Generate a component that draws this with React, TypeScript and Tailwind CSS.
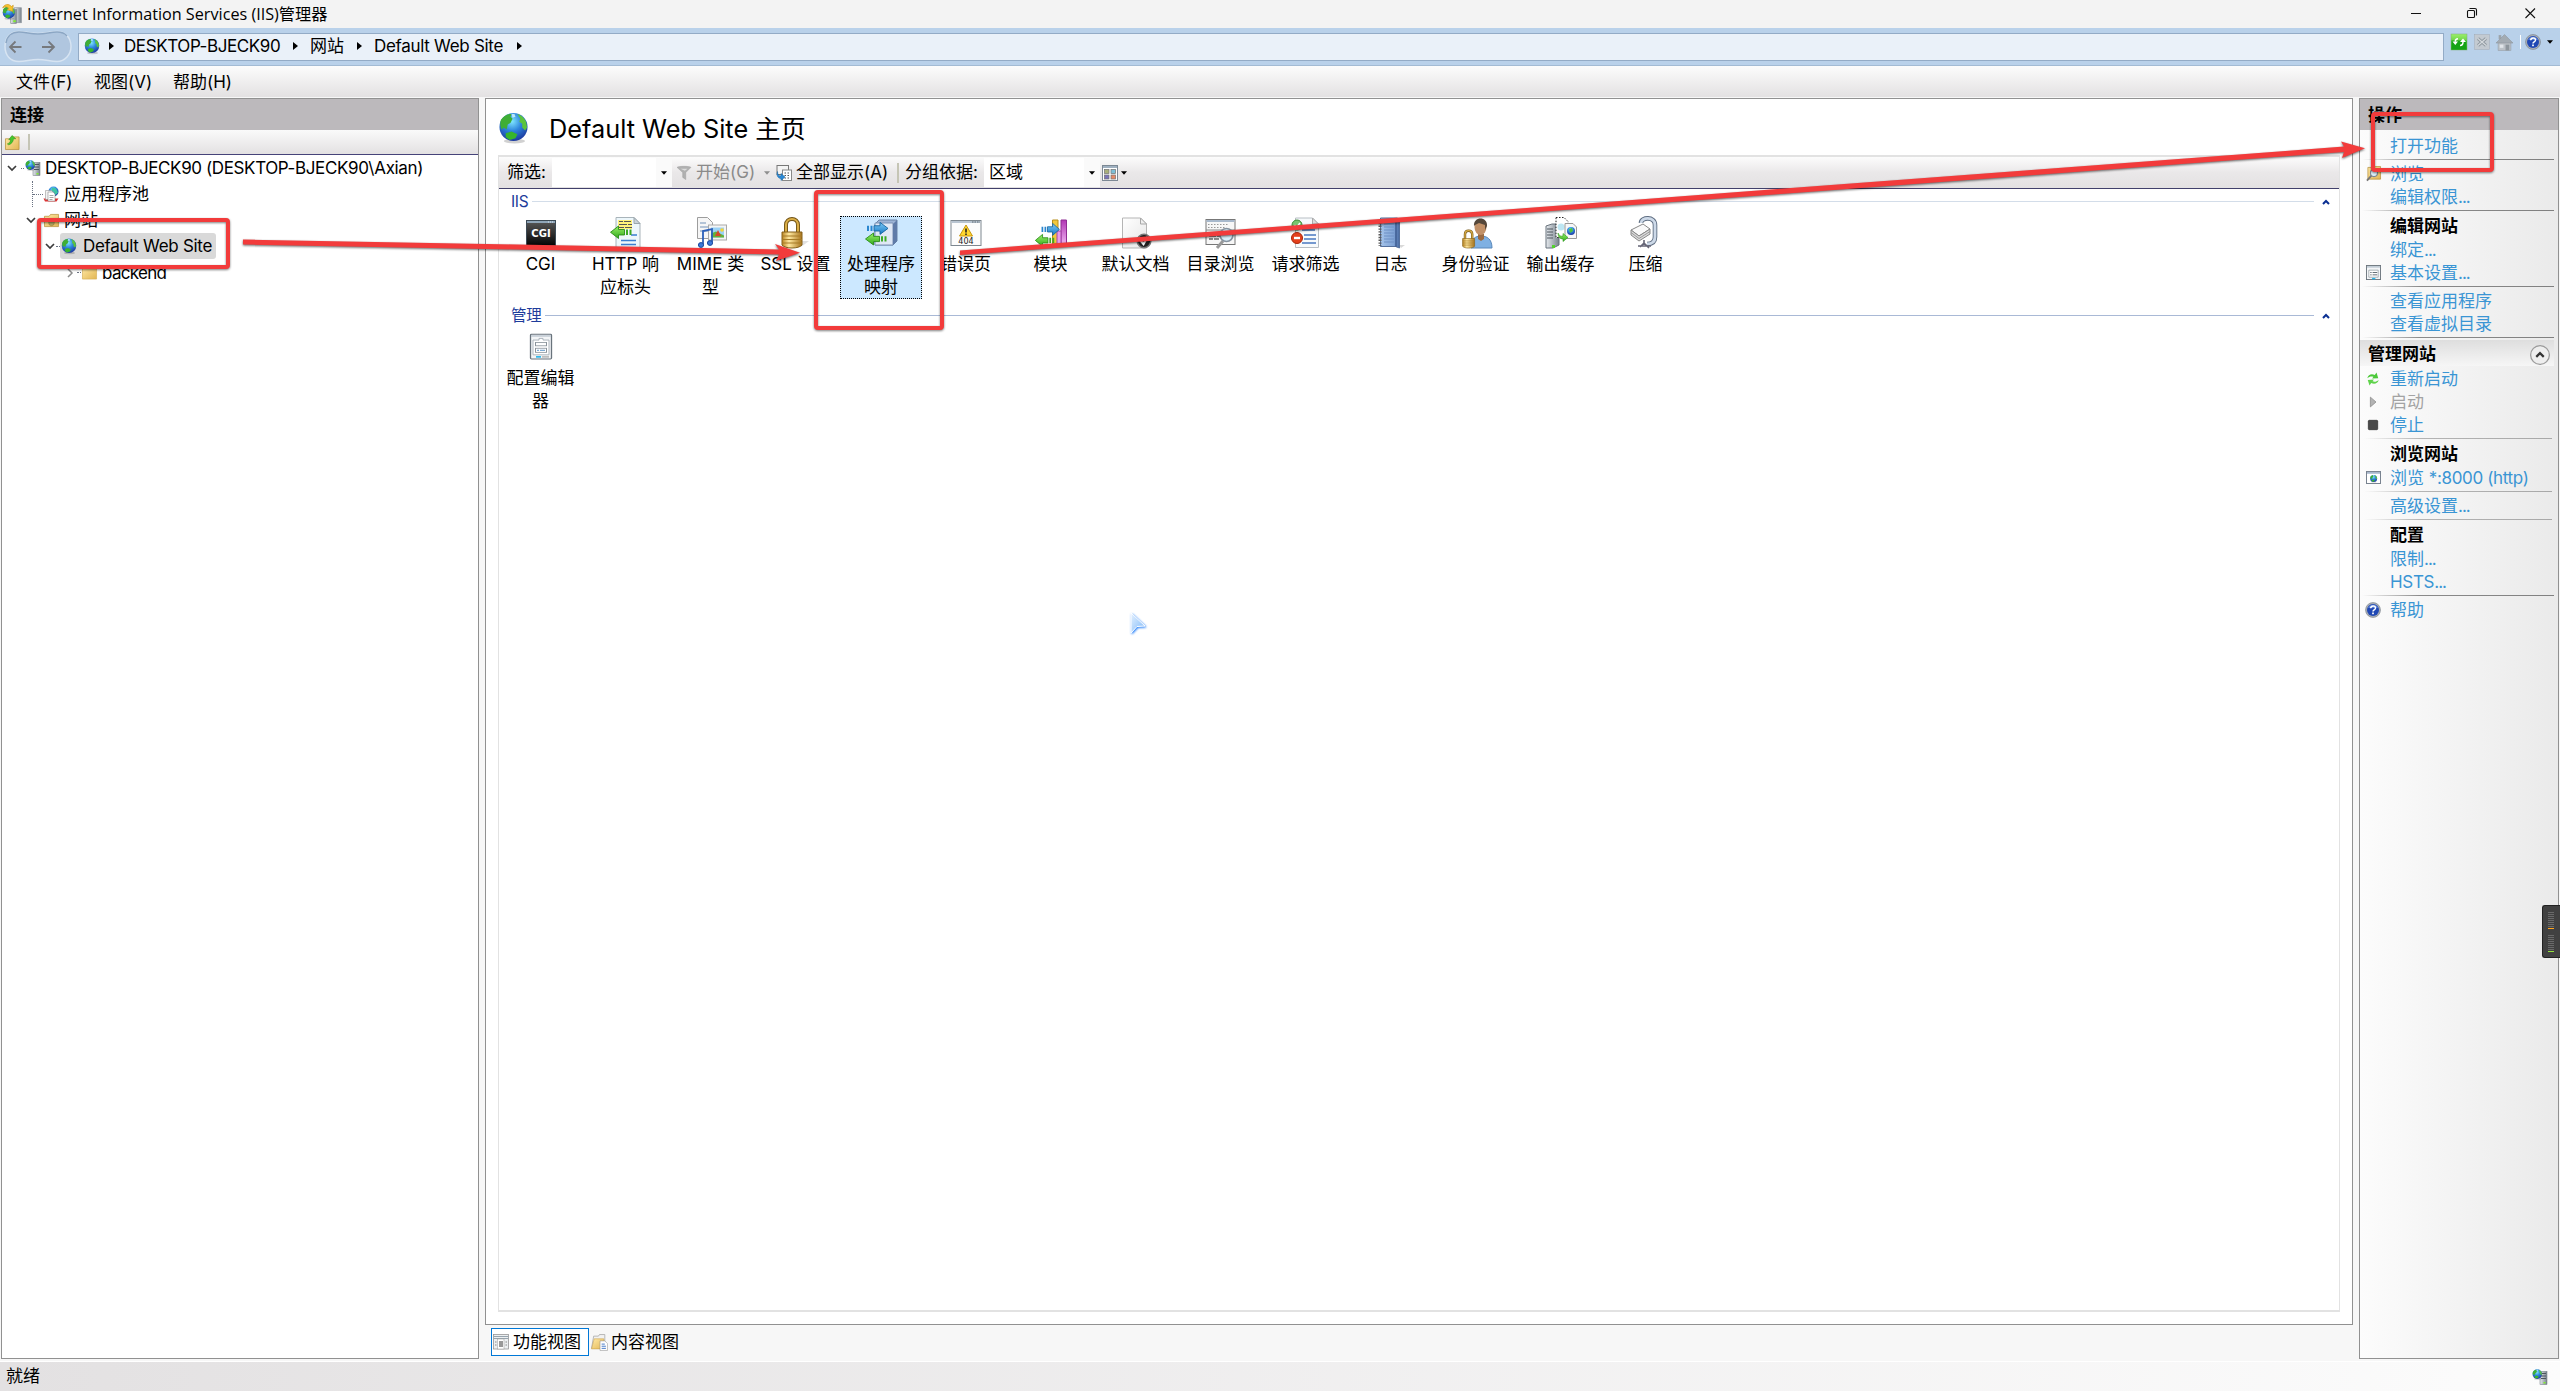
import React from 'react';

type Kids = { children?: React.ReactNode };

/* ---------- icons ---------- */

const Svg = ({ s, vb = 32, children }: { s: number; vb?: number } & Kids) => (
  <svg width={s} height={s} viewBox={`0 0 ${vb} ${vb}`} className="shrink-0 overflow-visible">
    {children}
  </svg>
);

const Defs = () => (
  <svg width="0" height="0" className="absolute">
    <defs>
      <radialGradient id="sea" cx="45%" cy="30%" r="75%">
        <stop offset="0" stopColor="#7fe6ff" />
        <stop offset=".45" stopColor="#2e86dd" />
        <stop offset="1" stopColor="#1a2f96" />
      </radialGradient>
      <linearGradient id="gold" x1="0" x2="1" y1="0" y2="0">
        <stop offset="0" stopColor="#b98420" />
        <stop offset=".35" stopColor="#ffe9a0" />
        <stop offset="1" stopColor="#a8741c" />
      </linearGradient>
      <linearGradient id="folder" x1="0" x2="1" y1="0" y2="1">
        <stop offset="0" stopColor="#ffe9a6" />
        <stop offset="1" stopColor="#e2b653" />
      </linearGradient>
      <linearGradient id="steel" x1="0" x2="1" y1="0" y2="0">
        <stop offset="0" stopColor="#e6eaee" />
        <stop offset="1" stopColor="#78828c" />
      </linearGradient>
      <linearGradient id="green" x1="0" x2="0" y1="0" y2="1">
        <stop offset="0" stopColor="#9bf06a" />
        <stop offset="1" stopColor="#2faa1a" />
      </linearGradient>
      <linearGradient id="blue" x1="0" x2="0" y1="0" y2="1">
        <stop offset="0" stopColor="#7ccbf7" />
        <stop offset="1" stopColor="#1778c4" />
      </linearGradient>
      <linearGradient id="book" x1="0" x2="1" y1="0" y2="0">
        <stop offset="0" stopColor="#a5c4ea" />
        <stop offset=".7" stopColor="#7fa3d6" />
        <stop offset="1" stopColor="#46679f" />
      </linearGradient>
      <linearGradient id="page" x1="0" x2="1" y1="0" y2="1">
        <stop offset="0" stopColor="#ffffff" />
        <stop offset="1" stopColor="#e6e6e6" />
      </linearGradient>
      <linearGradient id="dark" x1="0" x2="0" y1="0" y2="1">
        <stop offset="0" stopColor="#5a5a5a" />
        <stop offset="1" stopColor="#050505" />
      </linearGradient>
      <linearGradient id="purple" x1="0" x2="0" y1="0" y2="1">
        <stop offset="0" stopColor="#b136b4" />
        <stop offset="1" stopColor="#f0b6f2" />
      </linearGradient>
      <linearGradient id="cursor" x1="0" x2="1" y1="0" y2="1">
        <stop offset="0" stopColor="#e4f1ff" />
        <stop offset="1" stopColor="#7db8f8" />
      </linearGradient>
    </defs>
  </svg>
);

const GlobeArt = () => (
  <>
    <ellipse cx="17" cy="30" rx="11" ry="2.4" fill="#000" opacity=".18" />
    <circle cx="16" cy="15.5" r="14.5" fill="url(#sea)" />
    <path d="M3 8C6 4 10 1.500 14 2l-1 3 2 2-2 4-3 2-1 5-3-2-2 2c-2-3-2-7-1-10z" fill="#3fae35" />
    <path d="M20 2c4 1 7 4 9 8l1 6-2 3-3-3v-4l-3-2 1-3z" fill="#5cc43c" />
    <path d="M8 22l6-2 6 3-2 4-6 2-4-3z" fill="#37b52c" />
    <path d="M14 2h3l1 3-3 1z" fill="#d8f5ff" opacity=".8" />
  </>
);
const Globe = ({ s = 16 }: { s?: number }) => (
  <Svg s={s}>
    <GlobeArt />
  </Svg>
);

const ServerGlobe = ({ s = 16 }: { s?: number }) => (
  <Svg s={s}>
    <rect x="16" y="5" width="14" height="26" fill="url(#steel)" stroke="#66707a" />
    <path d="M18 9h10M18 14h10M18 19h10" stroke="#4d555e" strokeWidth="2" />
    <rect x="23" y="26" width="4" height="3" fill="#7ef02a" />
    <g transform="scale(.66)">
      <GlobeArt />
    </g>
  </Svg>
);

const AppIcon = () => (
  <Svg s={20}>
    <rect x="20" y="6" width="11" height="24" fill="url(#steel)" stroke="#8c949c" />
    <rect x="14" y="9" width="9" height="22" fill="url(#steel)" stroke="#7a828a" />
    <rect x="18" y="26" width="4" height="3" fill="#7ef02a" />
    <g transform="translate(0 3) scale(.68)">
      <GlobeArt />
    </g>
    <path d="M1 6C4 0 11-1 15 4l3-2-1 10-9-3 3-2C8 4 5 4 1 6z" fill="#f7c331" stroke="#c8921a" />
  </Svg>
);

const UpFolder = () => (
  <Svg s={15}>
    <path d="M1 8h10l3-4h16v27H1z" fill="url(#folder)" stroke="#b58d35" strokeWidth="1.500" />
    <path d="M5 19c5-2 7-5 7-9H8l7-9 8 7h-5c0 6-4 11-10 13z" fill="#46c72d" stroke="#1e8a14" />
  </Svg>
);

const AppPool = () => (
  <Svg s={16}>
    <circle cx="21" cy="11" r="10" fill="url(#sea)" />
    <path d="M18 3l8 2 4 8-5 5-3-6-5-3z" fill="#3fc5a0" />
    <path d="M1 25l3 6h23l4-6z" fill="#d33" />
    <path d="M5 9h12l4 4v14H5z" fill="#f2f2f2" stroke="#888" />
    <path d="M10 12h10l4 4v14H10z" fill="#fff" stroke="#777" />
    <path d="M13 19h8M13 23h8M13 27h6" stroke="#888" strokeWidth="1.500" />
  </Svg>
);

const Sites = () => (
  <Svg s={15}>
    <path d="M1 7h10l3-4h17v26H1z" fill="url(#folder)" stroke="#b58d35" strokeWidth="1.500" />
    <path d="M1 12h30" stroke="#c59c42" />
    <circle cx="16" cy="21" r="6" fill="#b3a763" stroke="#8d6f2b" />
  </Svg>
);

const PlainFolder = () => (
  <Svg s={15}>
    <path d="M1 6h11l3-3h16v27H1z" fill="url(#folder)" stroke="#d9b25a" strokeWidth="1.500" />
  </Svg>
);

const RightArrow = () => (
  <>
    <path d="M3 9h2v7H3zM6.500 9h2v7h-2z" fill="#2a86cf" />
    <path d="M10 9h6V4.500l8 8-8 8V16h-6z" fill="url(#blue)" stroke="#12629f" />
  </>
);
const LeftArrow = () => (
  <>
    <path d="M17 9h2v7h-2zM20.500 9h2v7h-2z" fill="#3cab25" />
    <path d="M15.500 9h-6V4.500l-8 8 8 8V16h6z" fill="url(#green)" stroke="#278a15" />
  </>
);

const Cgi = () => (
  <Svg s={32}>
    <rect x="1.500" y="3.500" width="29" height="25" fill="url(#dark)" stroke="#3c4a55" />
    <path d="M2 5h28" stroke="#8fa5b8" strokeWidth="2" />
    <path d="M23 5h6" stroke="#dce8f2" strokeWidth="1.200" strokeDasharray="1 1" />
    <text x="16" y="20" textAnchor="middle" fontSize="10" fontWeight="700" fill="#fff" fontFamily="'DejaVu Sans', sans-serif">
      CGI
    </text>
  </Svg>
);

const HttpHeaders = () => (
  <Svg s={32}>
    <path d="M7 .5h18l6 6v25H7z" fill="#edf7fb" stroke="#a9b4ba" />
    <path d="M25 .5v6h6z" fill="#c9d3d8" stroke="#9aa5ab" />
    <path d="M9 3h14v9H9z" fill="#fff27a" />
    <path d="M10 4.500h4M15 4.500h7M10 7.500h8M19 7.500h4M10 10.500h5M16 10.500h7" stroke="#555" />
    <path d="M22 18h6M12 23.500h15M12 27.500h15" stroke="#3a7fd0" strokeWidth="1.300" />
    <g transform="translate(0 5.500) scale(1 .78)">
      <LeftArrow />
    </g>
  </Svg>
);

const Mime = () => (
  <Svg s={32}>
    <path d="M2.500.5h10l5 5v16h-15z" fill="#f6f6f6" stroke="#9d9d9d" />
    <path d="M5 6h6M5 10h9M5 14h9" stroke="#7392b8" />
    <rect x="13.500" y="8" width="18" height="15" fill="#f4f4f4" stroke="#a9a9a9" />
    <rect x="16" y="10.500" width="13" height="10" fill="#9bd2f5" />
    <path d="M16 20.500v-4l5-2 8 4v2z" fill="#65b13a" />
    <path d="M20 19l3-6 3 6z" fill="#d64728" />
    <circle cx="27" cy="13" r="1.800" fill="#f4d43a" />
    <path d="M8 27V14l9-2v13" fill="none" stroke="#2b5fb8" strokeWidth="1.800" />
    <ellipse cx="6" cy="28" rx="2.600" ry="2.400" fill="#3b78d8" stroke="#1e4a9c" />
    <ellipse cx="15" cy="26" rx="2.600" ry="2.400" fill="#3b78d8" stroke="#1e4a9c" />
  </Svg>
);

const LockArt = () => (
  <>
    <path d="M10 16V8c0-8 12-8 12 0v8" fill="none" stroke="#6f5114" strokeWidth="4" />
    <path d="M10 16V8c0-8 12-8 12 0v8" fill="none" stroke="#d9ad46" strokeWidth="2.200" />
    <path d="M6 15h20v13c-3 4-17 4-20 0z" fill="url(#gold)" stroke="#85611a" />
    <path d="M6 19h20M6 22.500h20M6 26h20" stroke="#a67b26" strokeWidth="1" />
  </>
);
const Lock = () => (
  <Svg s={32}>
    <g transform="translate(-4 0)">
      <path d="M26 24l7 0-8 6z" fill="#000" opacity=".12" />
      <LockArt />
    </g>
  </Svg>
);

const Handlers = () => (
  <Svg s={32}>
    <path d="M10 7l4-4h18v21l-4 4H10z" fill="#9db4d6" stroke="#6b83a6" />
    <path d="M10 6h18v22H10z" fill="#dfe8f5" stroke="#7c93b5" />
    <path d="M28 7l4-4v21l-4 4z" fill="#5f7ba8" />
    <g transform="translate(-1 2) scale(1 .75)">
      <RightArrow />
    </g>
    <g transform="translate(-1 12.600) scale(1 .75)">
      <LeftArrow />
    </g>
  </Svg>
);

const Err404 = () => (
  <Svg s={32}>
    <rect x="1" y="3.500" width="30" height="25" fill="#fcfcfc" stroke="#7e8890" />
    <path d="M1.500 5h29" stroke="#b9c5d1" strokeWidth="2" />
    <path d="M22 5h8" stroke="#5d6871" strokeWidth="1.200" strokeDasharray="1.500 1" />
    <path d="M16 8l6.500 11h-13z" fill="#ffd62e" stroke="#c9970c" strokeLinejoin="round" />
    <path d="M16 11.500v4M16 16.500v1.500" stroke="#222" strokeWidth="1.600" />
    <text x="16" y="27" textAnchor="middle" fontSize="8" fill="#222" fontFamily="'DejaVu Sans', sans-serif">
      404
    </text>
  </Svg>
);

const Modules = () => (
  <Svg s={32}>
    <path d="M17.500 3h5.500v24h-5.500z" fill="#f1c83c" stroke="#b78d18" />
    <path d="M26 3h5.500v25H26z" fill="url(#purple)" stroke="#8f2c92" />
    <path d="M22 14h4v14h-4z" fill="#e79be8" stroke="#a545a8" />
    <g transform="translate(4 3) scale(.85 .75)">
      <RightArrow />
    </g>
    <g transform="translate(-1 14) scale(.9 .75)">
      <LeftArrow />
    </g>
  </Svg>
);

const DefaultDoc = () => (
  <Svg s={32}>
    <path d="M2.500 1h18l6 6v24h-24z" fill="url(#page)" stroke="#b5b5b5" />
    <path d="M20.500 1v6h6z" fill="#eee" stroke="#a8a8a8" />
    <circle cx="24" cy="24" r="6.800" fill="#222" stroke="#777" strokeWidth="1.500" />
    <path d="M20.500 23.500l3 3.500 4-7" fill="none" stroke="#fff" strokeWidth="2.200" />
  </Svg>
);

const DirBrowse = () => (
  <Svg s={32}>
    <rect x="1" y="2.500" width="29" height="25" fill="#f7f7f7" stroke="#777" />
    <path d="M1.500 4h28" stroke="#a8b9cc" strokeWidth="2" />
    <path d="M3 7.500h20M3 10.500h18" stroke="#999" strokeDasharray="1.500 1.500" />
    <path d="M1 13h29" stroke="#888" />
    <path d="M4 16h4M10 16h6M4 19h7M12 19h3M4 22h4M9 22h5" stroke="#222" />
    <path d="M18 24l-6 7" stroke="#999" strokeWidth="3" />
    <circle cx="21.500" cy="18" r="6.500" fill="#d9f0fb" stroke="#8793a0" strokeWidth="1.600" />
  </Svg>
);

const ReqFilter = () => (
  <Svg s={32}>
    <path d="M5.500 1h17l6 6v23.500h-23z" fill="#f7fafc" stroke="#b8bec4" />
    <path d="M22.500 1v6h6z" fill="#ddd" stroke="#aaa" />
    <path d="M12 9h13M12 13h13M14 18h12M14 22h12M12 26h14" stroke="#4a78c0" strokeWidth="1.300" />
    <circle cx="7" cy="8" r="5" fill="#78c46d" stroke="#3c8d35" />
    <path d="M4.500 8l2 2.500L10 6" stroke="#fff" fill="none" strokeWidth="1.500" />
    <circle cx="7" cy="21" r="5.500" fill="#e4401c" stroke="#a82609" />
    <path d="M4 21h6" stroke="#fff" strokeWidth="2.400" />
  </Svg>
);

const Logging = () => (
  <Svg s={32}>
    <path d="M24 28l6 0-4 3z" fill="#000" opacity=".15" />
    <path d="M5.500 1h17l2 2v28l-4-1.500h-15z" fill="url(#book)" stroke="#54709d" />
    <path d="M21 3v27" stroke="#3f5e93" strokeWidth="1.500" />
    <path d="M9 7h10M9 10h10M9 13h10M9 16h10M9 19h10M9 22h10M9 25h10" stroke="#6d8fc4" />
    <path d="M5 3v26" stroke="#5a5a5a" strokeWidth="3" strokeDasharray="1.400 1.400" />
  </Svg>
);

const Auth = () => (
  <Svg s={32}>
    <path d="M11 31c0-9 4-12 10-12s11 3 11 12z" fill="#7fb0e2" stroke="#5a88bb" />
    <path d="M18 17h6v5l-3 2-3-2z" fill="#9a6a42" />
    <ellipse cx="20.500" cy="10" rx="6" ry="8" fill="#c19067" />
    <path d="M14 9c-1-10 14-10 13 0l-2 4V8l-6-2-4 2z" fill="#55473a" />
    <g transform="translate(-1 12.500) scale(.6)">
      <LockArt />
    </g>
  </Svg>
);

const OutCache = () => (
  <Svg s={32}>
    <path d="M1 9l6-2h7v21l-6 3H1z" fill="url(#steel)" stroke="#69737c" />
    <path d="M2 12h6M2 15h6M2 18h6M2 21h6" stroke="#4e575f" />
    <path d="M11 .5h8l4 4v16H11z" fill="#fff" stroke="#222" strokeDasharray="1.500 1.500" />
    <circle cx="16" cy="10" r="3.500" fill="#bde6f2" />
    <path d="M20 6.500h8l3.500 3.500v11.500H20z" fill="#f7f7f7" stroke="#999" />
    <circle cx="26" cy="14" r="4" fill="url(#sea)" />
    <path d="M24 12l3-1 1 3-3 2z" fill="#4fc13a" />
    <path d="M13 16c1 3 3 3.500 5 3v-2.500l5 4-5 4V22c-3 0-5-2-5-6z" fill="url(#green)" stroke="#2f9a1f" strokeWidth=".6" />
    <rect x="7" y="28" width="3" height="3" fill="#52d32c" />
  </Svg>
);

const Compress = () => (
  <Svg s={32}>
    <path d="M11 6c0-6 14-7 14 2v12c0 5-3 7-8 7" fill="none" stroke="#5f6e82" strokeWidth="4.600" />
    <path d="M11 6c0-6 14-7 14 2v12c0 5-3 7-8 7" fill="none" stroke="#cdd9e8" strokeWidth="2.800" />
    <path d="M1 13l12-6 7 5-11 7z" fill="#fafafa" stroke="#888" />
    <path d="M1 13v5l8 6 11-7v-5l-11 7z" fill="#dcdcdc" stroke="#888" />
    <path d="M1 15.500l8 6 11-7" fill="none" stroke="#999" />
    <path d="M14 23v5M8 29h13M14 26l-4 4M14 26l5 5" stroke="#667" strokeWidth="1.600" />
  </Svg>
);

const ConfigEditor = () => (
  <Svg s={32}>
    <g transform="translate(0 2.500) scale(1 .82)">
      <rect x="5.500" y="1" width="21" height="30" rx="1" fill="#f3f5f7" stroke="#69737c" strokeWidth="1.300" />
      <path d="M6 3h20" stroke="#c3ccd5" strokeWidth="2" />
      <path d="M8 8h6v-2h4v2h6v18H8z" fill="#fff" stroke="#a7afb7" />
      <rect x="10.500" y="11" width="11" height="4" fill="#fff" stroke="#8a939b" />
      <rect x="10.500" y="18" width="11" height="5" fill="#fff" stroke="#8a939b" />
      <path d="M12 20.500h2M15 20.500h5" stroke="#4b8ac4" />
      <path d="M11 28.500h5" stroke="#25b5ea" strokeWidth="2" />
      <path d="M17 28.500h7" stroke="#bbb" strokeWidth="2" />
    </g>
  </Svg>
);

const Settings = () => (
  <Svg s={15}>
    <rect x="1" y="1" width="30" height="30" fill="#f4f6f8" stroke="#6c757d" strokeWidth="2" />
    <path d="M2 4h28" stroke="#b8c4cf" strokeWidth="3" />
    <path d="M6 11h20v15H6z" fill="#fff" stroke="#8c959d" strokeWidth="1.500" />
    <path d="M9 16h3M14 16h10M9 21h3M14 21h10" stroke="#5a646d" strokeWidth="2" />
    <path d="M13 29h7" stroke="#25b5ea" strokeWidth="3" />
  </Svg>
);

const BrowseFolder = () => (
  <Svg s={15}>
    <path d="M4 3h14l2-2h11v27H4z" fill="url(#folder)" stroke="#b58d35" strokeWidth="1.500" />
    <path d="M12 20L2 31" stroke="#777" strokeWidth="4" />
    <circle cx="17" cy="15" r="7.500" fill="#dff2fb" stroke="#7d8791" strokeWidth="2.500" />
  </Svg>
);

const Restart = () => (
  <Svg s={14}>
    <path d="M3 14C5 6 13 3 20 7l4-6 4 13-14 1 3-4c-5-2-9-1-14 3z" fill="#4cc93a" />
    <path d="M29 18c-2 8-10 11-17 7l-4 6-4-13 14-1-3 4c5 2 9 1 14-3z" fill="#5fd34b" />
  </Svg>
);

const Play = () => (
  <Svg s={12}>
    <path d="M9 3l15 13L9 29z" fill="#b3b3b3" stroke="#8a8a8a" strokeWidth="2" />
  </Svg>
);

const Stop = () => (
  <Svg s={10}>
    <rect x="1" y="1" width="30" height="30" rx="3" fill="#4a4a4a" stroke="#222" strokeWidth="2" />
  </Svg>
);

const BrowseSite = () => (
  <svg width="15" height="13" viewBox="0 0 32 28" className="shrink-0">
    <rect x="1" y="1" width="30" height="26" fill="#fff" stroke="#6f7a88" strokeWidth="2" />
    <path d="M2 4h28" stroke="#a9b8cc" strokeWidth="4" />
    <g transform="translate(8 8) scale(.52)">
      <GlobeArt />
    </g>
  </svg>
);

const Help = () => (
  <Svg s={16}>
    <circle cx="16" cy="16" r="15" fill="#a8adb5" stroke="#6d747c" />
    <circle cx="16" cy="16" r="12" fill="#2048b4" />
    <path d="M6 12a11 11 0 0 1 20 0z" fill="#6f95e6" opacity=".7" />
    <path d="M11.500 12.500c0-6 9.500-6 9.500-.5 0 4-5 3.500-5 7" fill="none" stroke="#fff" strokeWidth="3" />
    <rect x="14.300" y="21" width="3.400" height="3.400" fill="#fff" />
  </Svg>
);

const FeatureView = () => (
  <Svg s={16}>
    <rect x="1" y="1" width="30" height="29" fill="#eceff1" stroke="#909090" strokeWidth="1.500" />
    <path d="M1 5h30M1 9h30" stroke="#97a4ae" strokeWidth="2" />
    <rect x="9" y="10" width="13" height="20" fill="#fff" stroke="#999" />
    <path d="M12 16h8M12 20h8M12 24h8" stroke="#333" strokeWidth="2" />
    <path d="M4 16h3M4 22h3M25 16h3M25 22h3" stroke="#888" strokeWidth="2" />
  </Svg>
);

const ContentView = () => (
  <Svg s={17}>
    <path d="M1 27L5 4h9l2-3h10v26z" fill="#f1f1f1" stroke="#a8a8a8" strokeWidth="1.500" />
    <path d="M1 28L6 9h18l2 19z" fill="url(#folder)" stroke="#c79d45" />
    <path d="M17 13h9l5 5v13H17z" fill="#fff" stroke="#8f8f8f" />
    <path d="M20 19h6M20 23h8M20 27h8" stroke="#3f75c6" strokeWidth="1.800" />
  </Svg>
);

const Refresh = () => (
  <Svg s={16}>
    <rect x="0" y="0" width="32" height="32" fill="url(#green)" stroke="#7fae7a" />
    <rect x="1" y="13" width="30" height="18" fill="#15a315" />
    <path d="M3 15h11l-5.500 7zM18 16h12l-6-7z" fill="#fff" />
    <path d="M14 9.500c-4 0-5.500 2-5.500 6M18 23c4 0 6-2 6-7" fill="none" stroke="#fff" strokeWidth="3" />
  </Svg>
);

const StopNav = () => (
  <Svg s={16}>
    <rect x="1" y="1" width="30" height="30" fill="#c3cad1" stroke="#a3abb3" />
    <path d="M8 9l16 14M24 9L8 23" stroke="#8e979f" strokeWidth="6" />
    <path d="M8 9l16 14M24 9L8 23" stroke="#d5dade" strokeWidth="2.500" />
  </Svg>
);

const Home = () => (
  <Svg s={17}>
    <path d="M5 2h5v8H5z" fill="#9ca4ab" />
    <path d="M4 15h24v16H4z" fill="#bcc2c8" stroke="#9199a0" />
    <path d="M0 17L16 1l16 16z" fill="#a3abb2" stroke="#8c949b" />
    <path d="M18 20h7v11h-7z" fill="#8e969d" />
    <path d="M7 20h7v6H7z" fill="#e1e5e9" />
  </Svg>
);

const Funnel = () => (
  <Svg s={14}>
    <path d="M0 3c6-3 26-3 32 0L20 15v16l-7-5V15z" fill="#b0b0b0" stroke="#9b9b9b" />
    <path d="M8 6h16l-6 5z" fill="#dcdcdc" />
  </Svg>
);

const ShowAll = () => (
  <Svg s={16}>
    <rect x="2" y="1" width="23" height="18" fill="#f4f4f4" stroke="#777" strokeWidth="2" />
    <rect x="13" y="10" width="18" height="21" fill="#fff" stroke="#888" strokeWidth="2" />
    <path d="M17 16h3M23 16h3M17 21h3M23 21h3M17 26h3M23 26h3" stroke="#555" strokeWidth="2" />
    <path d="M3 13c0 6 3 9 7 9v-5l8 7-8 7v-4C5 27 0 22 3 13z" fill="#2c8ad6" stroke="#17629f" />
  </Svg>
);

const ViewGrid = () => (
  <svg width="16" height="16" viewBox="0 0 32 32" className="shrink-0">
    <rect x="1" y="1" width="30" height="30" fill="#fff" stroke="#7c8894" strokeWidth="2" />
    <path d="M2 4h28" stroke="#9fb0c0" strokeWidth="4" />
    <rect x="5" y="9" width="9" height="8" fill="#a9b07a" stroke="#777" strokeWidth="1.500" />
    <rect x="18" y="9" width="9" height="8" fill="#7cc0d8" stroke="#777" strokeWidth="1.500" />
    <rect x="5" y="20" width="9" height="8" fill="#7a74b8" stroke="#777" strokeWidth="1.500" />
    <rect x="18" y="20" width="9" height="8" fill="#e58a68" stroke="#777" strokeWidth="1.500" />
  </svg>
);

const Down = ({ gray }: { gray?: boolean }) => (
  <svg width="6" height="4" viewBox="0 0 7 4" className="shrink-0">
    <path d="M0 0h7L3.500 4z" fill={gray ? '#8e8e8e' : '#000'} />
  </svg>
);
const Crumb = () => (
  <span className="flex w-[30px] shrink-0 justify-center pb-px">
    <svg width="5" height="8" viewBox="0 0 5 8">
      <path d="M0 0l5 4-5 4z" />
    </svg>
  </span>
);
const Chevron = ({ closed }: { closed?: boolean }) => (
  <svg width="10" height="10" viewBox="0 0 10 10" className="shrink-0" fill="none">
    {closed ? (
      <path d="M3 1l4 4-4 4" stroke="#8c8c8c" strokeWidth="1.500" />
    ) : (
      <path d="M1 3l4 4 4-4" stroke="#3c3c3c" strokeWidth="1.700" />
    )}
  </svg>
);

/* ---------- pieces ---------- */

const GroupTitle = ({ label, line, width }: { label: string; line: string; width: string }) => (
  <div className="flex h-6 items-center pt-px text-[15.5px] text-[#1e3c9b]">
    <span className={`${width} tracking-[-0.3px]`}>{label}</span>
    <span className={`h-px flex-1 ${line}`} />
    <svg width="8" height="6" viewBox="0 0 8 6" className="ml-2 mr-[9px] shrink-0">
      <path d="M1 5l3-3 3 3" fill="none" stroke="#0a2f92" strokeWidth="2" />
    </svg>
  </div>
);

const Tile = ({ icon, lines, selected }: { icon: React.ReactNode; lines: string[]; selected?: boolean }) => (
  <div className="flex w-[85px] shrink-0 justify-center">
    <div
      className={
        selected
          ? 'ml-px flex h-[83px] w-[82px] flex-col items-center bg-[#cce8ff] outline-1 -outline-offset-1 outline-dotted outline-black'
          : 'flex h-[83px] flex-col items-center'
      }
    >
      <div className="mb-[5px] h-8 pt-px">{icon}</div>
      {lines.map((l) => (
        <span key={l} className="h-[23px] whitespace-nowrap leading-[23px]">
          {l}
        </span>
      ))}
    </div>
  </div>
);

const features = [
  { icon: <Cgi />, lines: ['CGI'] },
  { icon: <HttpHeaders />, lines: ['HTTP 响', '应标头'] },
  { icon: <Mime />, lines: ['MIME 类', '型'] },
  { icon: <Lock />, lines: ['SSL 设置'] },
  { icon: <Handlers />, lines: ['处理程序', '映射'], selected: true },
  { icon: <Err404 />, lines: ['错误页'] },
  { icon: <Modules />, lines: ['模块'] },
  { icon: <DefaultDoc />, lines: ['默认文档'] },
  { icon: <DirBrowse />, lines: ['目录浏览'] },
  { icon: <ReqFilter />, lines: ['请求筛选'] },
  { icon: <Logging />, lines: ['日志'] },
  { icon: <Auth />, lines: ['身份验证'] },
  { icon: <OutCache />, lines: ['输出缓存'] },
  { icon: <Compress />, lines: ['压缩'] },
];

const Link = ({ icon, muted, more, children }: { icon?: React.ReactNode; muted?: boolean; more?: boolean } & Kids) => (
  <div className="flex h-[23px] items-center">
    <span className="flex w-[30px] shrink-0 justify-center pr-1">{icon}</span>
    <span
      className={
        muted ? 'whitespace-nowrap pt-0.5 leading-[23px] text-[#a3a3a3]' : 'whitespace-nowrap pt-0.5 leading-[23px] text-[#3a95d4]'
      }
    >
      {children}
      {more && <span className="tracking-[-1px]">...</span>}
    </span>
  </div>
);
const Head = ({ children }: Kids) => <div className="h-[25px] pl-[30px] pt-px font-bold leading-6">{children}</div>;
const Rule = ({ light }: { light?: boolean }) => (
  <div
    className={
      light
        ? 'mb-0.5 ml-1 mr-1.5 mt-0.5 h-px bg-linear-to-r from-transparent via-[#b4b4b4] via-30% to-[#a8a8a8]'
        : 'mb-0.5 ml-0.5 mr-1 mt-0.5 h-px bg-linear-to-r from-transparent via-[#8a8a8a] via-30% to-[#808080]'
    }
  />
);

const Separator = () => <span className="h-4 w-0.5 shrink-0 bg-[#c5c5b5]" />;
const Stub = ({ className }: { className: string }) => (
  <span className={`shrink-0 border-t border-dotted border-gray-500 ${className}`} />
);

const Connections = () => (
  <section className="flex w-[478px] shrink-0 flex-col border border-[#919191] bg-white">
    <div className="h-[31px] bg-[#bcb9bc] pl-2 font-bold leading-8">连接</div>
    <div className="flex h-[25px] items-center gap-2 border-b border-[#454379] bg-linear-to-b from-[#fafafa] to-[#e3e1e2] pl-[3px]">
      <UpFolder />
      <Separator />
    </div>
    <div>
      <div className="flex h-[26px] items-center">
        <span className="ml-[5px] flex w-[18px] items-center">
          <Chevron />
          <Stub className="ml-1 w-[3px]" />
        </span>
        <ServerGlobe />
        <span className="ml-1 whitespace-nowrap tracking-[-0.38px]">DESKTOP-BJECK90 (DESKTOP-BJECK90\Axian)</span>
      </div>
      <div className="ml-[30px] flex h-[26px] items-center border-l border-dotted border-gray-500">
        <Stub className="w-2.5" />
        <AppPool />
        <span className="ml-[5px]">应用程序池</span>
      </div>
      <div className="ml-6 flex h-[26px] items-center">
        <Chevron />
        <span className="ml-2 flex">
          <Sites />
        </span>
        <span className="ml-[5px]">网站</span>
      </div>
      <div className="ml-[43px] flex h-[26px] items-center">
        <Chevron />
        <Stub className="ml-px w-1" />
        <span className="flex h-[26px] w-[156px] items-center gap-1.5 rounded-[3px] bg-[#d9d9d9] pl-px">
          <Globe />
          <span className="whitespace-nowrap tracking-[-0.3px]">Default Web Site</span>
        </span>
      </div>
      <div className="ml-[63px] flex h-[27px] items-center">
        <Chevron closed />
        <Stub className="ml-0.5 mr-px w-1" />
        <PlainFolder />
        <span className="ml-[5px] pt-px tracking-[-0.7px]">backend</span>
      </div>
    </div>
  </section>
);

const Toolbar = () => (
  <div className="flex h-8 shrink-0 items-center border-b border-[#41406b] bg-linear-to-b from-[#fcfcfc] via-[#eae8e9] to-[#e3e1e2]">
    <span className="w-[53px] pl-2">筛选:</span>
    <span className="flex h-[29px] w-[120px] items-center justify-end bg-white">
      <span className="flex h-full w-4 items-center justify-center bg-[#fafafa]">
        <Down />
      </span>
    </span>
    <span className="ml-[5px] flex w-[19px]">
      <Funnel />
    </span>
    <span className="w-[68px] text-[#8a8a8a]">开始(G)</span>
    <span className="flex w-3 items-center">
      <Down gray />
    </span>
    <ShowAll />
    <span className="ml-1 w-[101px] whitespace-nowrap">全部显示(A)</span>
    <span className="h-5 w-0.5 shrink-0 bg-[#c5c5b5]" />
    <span className="ml-[6px] w-[79px] whitespace-nowrap">分组依据:</span>
    <span className="flex h-[29px] w-[116px] items-center justify-between bg-white pl-[5px]">
      区域
      <span className="flex h-full w-4 items-center justify-center bg-[#fafafa]">
        <Down />
      </span>
    </span>
    <span className="ml-[2px] mr-[3px] flex">
      <ViewGrid />
    </span>
    <Down />
  </div>
);

const HomePane = () => (
  <div className="flex min-w-0 flex-1 flex-col">
    <section className="flex h-[1227px] shrink-0 flex-col border border-[#919191] bg-white px-3">
      <div className="flex h-[56px] items-center">
        <Globe s={31} />
        <span className="ml-5 mt-[3px] whitespace-nowrap text-[25.3px]">Default Web Site 主页</span>
      </div>
      <div className="flex h-[1157px] flex-col border border-b-2 border-t-2 border-[#e2e2e2]">
        <Toolbar />
        <div className="pl-3">
          <GroupTitle label="IIS" width="w-[21px]" line="bg-[#d3dde9]" />
        </div>
        <div className="-ml-px mt-[3px] flex h-[87px]">
          {features.map((f) => (
            <Tile key={f.lines[0]} {...f} />
          ))}
        </div>
        <div className="pl-3">
          <GroupTitle label="管理" width="w-[34px]" line="bg-[#a9b9d6]" />
        </div>
        <div className="-ml-px mt-[3px] flex">
          <Tile icon={<ConfigEditor />} lines={['配置编辑', '器']} />
        </div>
      </div>
    </section>
    <div className="flex items-center pl-[6px] pt-[3px]">
      <span className="flex h-7 w-[98px] items-center gap-1 border border-[#0078d7] bg-white pl-px">
        <FeatureView />
        功能视图
      </span>
      <span className="flex items-center gap-[3px] pl-0.5">
        <ContentView />
        内容视图
      </span>
    </div>
  </div>
);

const Actions = () => (
  <section className="w-[200px] shrink-0 border border-[#919191] bg-linear-to-r from-[#fcfcfc] to-[#eaeaea]">
    <div className="mb-1 h-[31px] bg-[#bcb9bc] pl-2 font-bold leading-8">操作</div>
    <Link>打开功能</Link>
    <Rule />
    <Link icon={<BrowseFolder />}>浏览</Link>
    <Link more>编辑权限</Link>
    <Rule />
    <Head>编辑网站</Head>
    <Link more>绑定</Link>
    <Link more icon={<Settings />}>
      基本设置
    </Link>
    <Rule />
    <Link>查看应用程序</Link>
    <Link>查看虚拟目录</Link>
    <Rule />
    <div className="mr-1 flex h-[26px] items-center justify-between bg-linear-to-b from-[#dedede] to-[#f6f6f6] pl-2 pr-1 font-bold">
      <span className="pt-0.5">管理网站</span>
      <span className="mt-[3px]">
        <Svg s={20}>
          <circle cx="16" cy="16" r="15" fill="#eee" stroke="#9b9b9b" strokeWidth="2" />
          <path d="M10 19l6-6 6 6" fill="none" stroke="#333" strokeWidth="3.500" />
        </Svg>
      </span>
    </div>
    <div className="pt-px">
      <Link icon={<Restart />}>重新启动</Link>
      <Link icon={<Play />} muted>
        启动
      </Link>
      <Link icon={<Stop />}>停止</Link>
    </div>
    <Rule light />
    <Head>浏览网站</Head>
    <Link icon={<BrowseSite />}>
      浏览 <span className="tracking-[-0.35px]">*:8000 (http)</span>
    </Link>
    <Rule light />
    <Link more>高级设置</Link>
    <Rule light />
    <Head>配置</Head>
    <Link more>限制</Link>
    <Link more>
      <span className="tracking-[-0.3px]">HSTS</span>
    </Link>
    <Rule />
    <Link icon={<Help />}>帮助</Link>
  </section>
);

const Meter = ({ lit }: { lit: string }) => (
  <div className="flex flex-col gap-px">
    {Array.from({ length: 8 }, (_, i) => (
      <span key={i} className="h-px w-1.5 bg-[#6a6a6a]" />
    ))}
    <span className={`h-px w-1.5 ${lit}`} />
  </div>
);

const RED = '#f23b3b';

const Annotations = () => (
  <>
    <div className="absolute left-[37px] top-[218px] h-[51px] w-[193px] rounded-[4px] border-4 border-[#f23b3b] drop-shadow-[0_1px_1px_rgba(0,0,0,0.5)]" />
    <div className="absolute left-[814px] top-[190px] h-[140px] w-[130px] rounded-[4px] border-4 border-[#f23b3b] drop-shadow-[0_1px_1px_rgba(0,0,0,0.5)]" />
    <div className="absolute left-[2371px] top-[112px] h-[60px] w-[123px] rounded-[4px] border-4 border-[#f23b3b] drop-shadow-[0_1px_1px_rgba(0,0,0,0.5)]" />
    <svg
      width="2560"
      height="400"
      viewBox="0 0 2560 400"
      className="pointer-events-none absolute left-0 top-0 drop-shadow-[0_1px_1px_rgba(0,0,0,0.6)]"
    >
      <path d="M243 239.500L779 249.500L775 244L800 252.700L776 261L779 254.500L243 244.500z" fill={RED} />
      <path d="M960 250.500L2344 146.500L2341 141.500L2365 148.200L2342 158L2344 152L960 255z" fill={RED} />
    </svg>
    <svg
      width="20"
      height="26"
      viewBox="0 0 20 26"
      className="absolute left-[1130px] top-[611px] drop-shadow-[1px_1px_1px_rgba(40,130,250,1)]"
    >
      <path d="M1 2l14 13-8 0.500L1 22z" fill="url(#cursor)" stroke="#fff" strokeWidth="1" />
    </svg>
    <div className="absolute left-[2542px] top-[905px] flex h-[53px] w-[18px] flex-col gap-1.5 rounded-l-[3px] border border-r-0 border-[#222] bg-[#414141] pl-[5px] pt-1.5">
      <Meter lit="bg-[#ffa51f]" />
      <Meter lit="bg-[#95e23c]" />
    </div>
  </>
);

export default function App() {
  return (
    <div className="relative flex h-[1391px] w-[2560px] flex-col overflow-hidden bg-[#f7f7f7] font-['Inter','Noto_Sans_CJK_SC',sans-serif] text-[17px] leading-[23px] text-black">
      <Defs />
      <header className="flex h-7 shrink-0 items-center bg-[#f3f3f3] pl-0.5">
        <AppIcon />
        <span className="ml-[5px] flex-1 font-['Open_Sans','Noto_Sans_CJK_SC',sans-serif] text-[16.200px] leading-7">
          Internet Information Services (IIS)管理器
        </span>
        <svg width="170" height="28" viewBox="0 0 170 28" fill="none" stroke="#111" strokeWidth="1.100">
          <path d="M21 13.500h10M135.500 8.500l9.500 9.500M145 8.500l-9.500 9.500" />
          <rect x="77.500" y="10.500" width="7" height="7" rx="1" />
          <path d="M79.500 8.500h5.500q1.500 0 1.500 1.500v5.500" />
        </svg>
      </header>

      <nav className="flex h-[38px] shrink-0 items-center border-b border-[#a3bbd4] bg-[#b9d1ea] pl-1">
        <svg width="68" height="34" viewBox="0 0 68 34" className="shrink-0" fill="none">
          <path
            d="M15 1.500c7 0 11 2 19 2s12-2 19-2c9 0 14 7 14 15s-6 15-14 15c-7 0-11-2-19-2s-12 2-19 2C6 31.500 1 25 1 16.500s5-15 14-15z"
            fill="#b0c6df"
            stroke="#d7e4f2"
            strokeWidth="1.500"
          />
          <path d="M2 13C3 6 8 2 15 2c7 0 11 2 19 2s12-2 19-2c5 0 8 1.500 10 4" stroke="#8ba6c4" strokeWidth="1.500" />
          <path d="M17.500 17H6.500M11.500 11.500L6 17l5.500 5.500M38 17h11.500M44.500 11.500L50 17l-5.500 5.500" stroke="#76797d" strokeWidth="1.800" />
        </svg>
        <div className="ml-1.5 flex h-7 w-[2366px] shrink-0 items-center border border-[#93abc6] bg-[#eaf1f9] pl-[5px]">
          <span className="-mt-0.5 flex">
            <Globe />
          </span>
          <span className="-mx-1 flex">
            <Crumb />
          </span>
          <span className="ml-[2px] w-[156px] whitespace-nowrap tracking-[-0.4px]">DESKTOP-BJECK90</span>
          <Crumb />
          <span>网站</span>
          <Crumb />
          <span className="w-[130px] whitespace-nowrap tracking-[-0.3px]">Default Web Site</span>
          <Crumb />
        </div>
        <div className="mb-[9px] ml-[7px] flex items-center">
          <Refresh />
          <span className="ml-[7px] flex">
            <StopNav />
          </span>
          <span className="ml-1.5 flex">
            <Home />
          </span>
          <span className="ml-[7px] h-3.5 w-px bg-white" />
          <span className="ml-1 mr-1.5 flex">
            <Help />
          </span>
          <Down />
        </div>
      </nav>

      <div className="flex h-[31px] shrink-0 items-center bg-linear-to-b from-[#fcfcfc] to-[#e3e1e2] pl-4 pt-px">
        <span className="w-[78px]">文件(F)</span>
        <span className="w-[79px]">视图(V)</span>
        <span>帮助(H)</span>
      </div>

      <main className="mt-px flex h-[1261px] shrink-0 pl-px pr-px">
        <Connections />
        <div className="ml-[6px] mr-1.5 flex min-w-0 flex-1">
          <HomePane />
        </div>
        <Actions />
      </main>

      <footer className="mt-[2px] flex h-[30px] shrink-0 items-center justify-between border-t border-white bg-linear-to-r from-[#e3e1e2] to-[#fcfcfc] pl-1.5 pr-3">
        <span>就绪</span>
        <ServerGlobe s={16} />
      </footer>

      <Annotations />
    </div>
  );
}
